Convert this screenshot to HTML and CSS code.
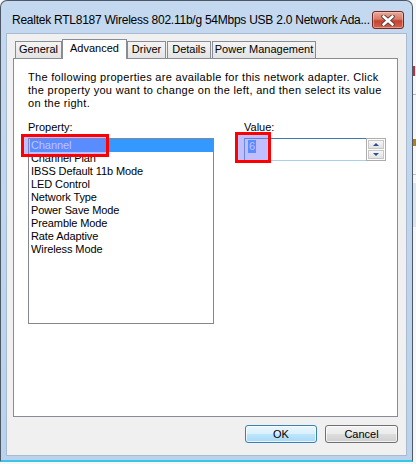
FILE: index.html
```html
<!DOCTYPE html>
<html>
<head>
<meta charset="utf-8">
<link rel="stylesheet" href="styles.css">
</head>
<body>
<div class="screen">
  <div class="window">
    <div class="titlebar">
      <span class="title">Realtek RTL8187 Wireless 802.11b/g 54Mbps USB 2.0 Network Ada...</span>
      <div class="close">
        <svg width="14" height="11" viewBox="0 0 14 11">
          <path d="M2.5 1.5 L11.5 9.5 M11.5 1.5 L2.5 9.5" stroke="#5a3a36" stroke-width="4.4" stroke-linecap="round"/>
          <path d="M2.5 1.5 L11.5 9.5 M11.5 1.5 L2.5 9.5" stroke="#ffffff" stroke-width="2.6" stroke-linecap="round"/>
        </svg>
      </div>
    </div>
    <div class="client">
      <div class="tabs">
        <div class="tab tab-general">General</div>
        <div class="tab active tab-advanced">Advanced</div>
        <div class="tab tab-driver">Driver</div>
        <div class="tab tab-details">Details</div>
        <div class="tab tab-power">Power Management</div>
      </div>
      <div class="panel">
        <p class="intro">The following properties are available for this network adapter. Click<br>the property you want to change on the left, and then select its value<br>on the right.</p>
        <div class="cols">
          <div class="col-left">
            <div class="label">Property:</div>
            <div class="listbox">
              <div class="item selected">Channel</div>
              <div class="item">Channel Plan</div>
              <div class="item">IBSS Default 11b Mode</div>
              <div class="item">LED Control</div>
              <div class="item">Network Type</div>
              <div class="item">Power Save Mode</div>
              <div class="item">Preamble Mode</div>
              <div class="item">Rate Adaptive</div>
              <div class="item">Wireless Mode</div>
            </div>
          </div>
          <div class="col-right">
            <div class="label">Value:</div>
            <div class="spin">
              <div class="edit"><span class="sel">6</span></div>
              <div class="spinbox">
                <div class="sbtn"><span class="arrow-up"></span></div>
                <div class="sbtn"><span class="arrow-down"></span></div>
              </div>
            </div>
          </div>
        </div>
      </div>
      <div class="actions">
        <button class="btn btn-ok">OK</button>
        <button class="btn btn-cancel">Cancel</button>
      </div>
    </div>
  </div>
  <div class="behind">
    <div class="bh-red"></div>
    <div class="bh-line"></div>
    <div class="bh-glyph"></div>
    <div class="bh-line2"></div>
    <div class="bh-blue"></div>
  </div>
  <div class="mark mark-property"></div>
  <div class="mark mark-value"></div>
</div>
</body>
</html>
```
FILE: styles.css
```css
html, body {
  margin: 0;
  padding: 0;
  background: #ffffff;
}

.screen {
  position: relative;
  width: 416px;
  height: 464px;
  display: flex;
  align-items: flex-start;
  background: #f7f7f7;
  overflow: hidden;
  font-family: "Liberation Sans", Arial, sans-serif;
  font-size: 11px;
  color: #000;
}

.window {
  width: 413px;
  height: 462px;
  flex: none;
  box-sizing: border-box;
  border: 1px solid #4d5866;
  border-bottom: 2px solid #36c6e8;
  border-radius: 7px 7px 0 0;
  background: linear-gradient(#c4d9f0, #bbd2ec);
  display: flex;
  flex-direction: column;
  padding: 0 6px 5px 6px;
}

.titlebar {
  height: 33px;
  box-sizing: border-box;
  display: flex;
  align-items: center;
  padding: 5px 2px 0 5px;
}

.title {
  flex: 1;
  font-size: 12px;
  letter-spacing: -0.25px;
  white-space: nowrap;
}

.close {
  width: 32px;
  height: 18px;
  flex: none;
  box-sizing: border-box;
  border: 1px solid #6f2b22;
  border-radius: 3px;
  background: linear-gradient(#e9a998 0%, #d77a67 45%, #c6422f 55%, #d26650 100%);
  box-shadow: inset 0 0 0 1px rgba(255, 220, 210, 0.45);
  display: flex;
  align-items: center;
  justify-content: center;
}

.client {
  flex: 1;
  background: #f0f0f0;
  box-shadow: 0 0 0 1px #a9bbd0;
  padding: 5px 8px 0 6px;
  display: flex;
  flex-direction: column;
}

.tabs {
  display: flex;
  align-items: flex-end;
  height: 19px;
  padding-left: 2px;
  position: relative;
  z-index: 1;
}

.tab {
  height: 17px;
  box-sizing: border-box;
  border: 1px solid #898c95;
  border-bottom: none;
  background: linear-gradient(#f4f4f4, #e3e3e3);
  text-align: center;
  line-height: 15px;
  white-space: nowrap;
}

.tab.active {
  height: 20px;
  margin-bottom: -1px;
  background: #ffffff;
  line-height: 17px;
}

.tab-general { width: 47px; }
.tab-advanced { width: 65px; }
.tab-driver { width: 39px; margin-right: 1px; }
.tab-details { width: 44px; margin-right: 1px; }
.tab-power { width: 104px; }

.panel {
  width: 385px;
  height: 359px;
  box-sizing: border-box;
  border: 1px solid #898c95;
  background: #ffffff;
  padding: 12px 14px 0 14px;
}

.intro {
  margin: 0;
  line-height: 13px;
  letter-spacing: 0.3px;
  white-space: nowrap;
}

.cols {
  display: flex;
  margin-top: 11px;
}

.col-left {
  width: 186px;
}

.col-right {
  margin-left: 30px;
}

.label {
  line-height: 13px;
  margin-bottom: 4px;
}

.listbox {
  width: 186px;
  height: 186px;
  box-sizing: border-box;
  border: 1px solid #828790;
  background: #ffffff;
}

.item {
  line-height: 13px;
  padding-left: 2px;
  letter-spacing: -0.1px;
  white-space: nowrap;
}

.item.selected {
  background: #3399ff;
  color: #ffffff;
  margin-left: 1px;
  padding-left: 1px;
}

.spin {
  display: flex;
  height: 23px;
}

.edit {
  width: 122px;
  box-sizing: border-box;
  border: 1px solid;
  border-color: #3d7bad #b5d7ee #a9d0ea #5a90bd;
  border-right: none;
  padding: 1px 0 0 3px;
  background: #ffffff;
  line-height: 13px;
}

.sel {
  background: #3399ff;
  color: #ffffff;
  padding: 0 1px;
  display: inline-block;
}

.spinbox {
  width: 20px;
  box-sizing: border-box;
  border: 1px solid #acacac;
  padding: 1px;
  display: flex;
  flex-direction: column;
  gap: 1px;
  background: #ffffff;
}

.sbtn {
  flex: 1;
  box-sizing: border-box;
  border: 1px solid #c6c6c6;
  background: linear-gradient(#f7f7f7, #e2e2e2);
  display: flex;
  align-items: center;
  justify-content: center;
}

.arrow-up {
  width: 0;
  height: 0;
  border-left: 3px solid transparent;
  border-right: 3px solid transparent;
  border-bottom: 3px solid #2c4f8f;
}

.arrow-down {
  width: 0;
  height: 0;
  border-left: 3px solid transparent;
  border-right: 3px solid transparent;
  border-top: 3px solid #2c4f8f;
}

.actions {
  display: flex;
  justify-content: flex-end;
  gap: 8px;
  margin-top: 8px;
}

.btn {
  height: 18px;
  box-sizing: border-box;
  padding: 0;
  font-family: "Liberation Sans", Arial, sans-serif;
  font-size: 11px;
  color: #000;
  border: 1px solid #707070;
  border-radius: 3px;
  background: linear-gradient(#f2f2f2 0%, #ebebeb 50%, #dddddd 50%, #cfcfcf 100%);
  box-shadow: inset 0 0 0 1px rgba(255, 255, 255, 0.7);
}

.btn-ok {
  width: 72px;
  border-color: #3c7fb1;
  background: linear-gradient(#eaf6fd 0%, #d9f0fc 50%, #bee6fd 50%, #a7d9f5 100%);
}

.btn-cancel {
  width: 73px;
}

.behind {
  flex: 1;
  height: 464px;
  background: #f7f7f7;
  display: flex;
  flex-direction: column;
}

.bh-red {
  margin-top: 66px;
  height: 10px;
  width: 2px;
  background: #c0303a;
}

.bh-line {
  margin-top: 18px;
  height: 1px;
  background: #b8b8b8;
}

.bh-glyph {
  margin-top: 44px;
  height: 7px;
  width: 3px;
  background: #b08020;
}

.bh-line2 {
  margin-top: 28px;
  height: 1px;
  background: #c0c0c0;
}

.bh-blue {
  margin-top: 8px;
  height: 44px;
  background: #dde6ee;
}

.mark {
  position: absolute;
  box-sizing: border-box;
  border: 3px solid #ff0000;
  background: rgba(128, 128, 255, 0.5);
}

.mark-property {
  left: 21px;
  top: 134px;
  width: 88px;
  height: 23px;
}

.mark-value {
  left: 235px;
  top: 132px;
  width: 36px;
  height: 31px;
}
```
